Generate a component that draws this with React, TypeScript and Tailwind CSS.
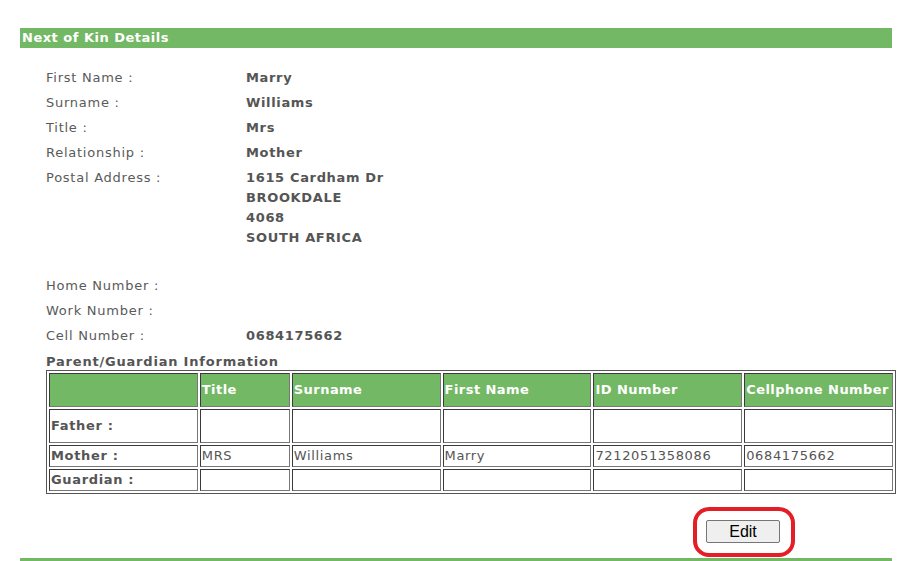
import React from "react";

const font = { fontFamily: '"DejaVu Sans", Verdana, sans-serif' };

type Row = { label: string; value?: string[] };

const details: Row[] = [
  { label: "First Name :", value: ["Marry"] },
  { label: "Surname :", value: ["Williams"] },
  { label: "Title :", value: ["Mrs"] },
  { label: "Relationship :", value: ["Mother"] },
  { label: "Postal Address :", value: ["1615 Cardham Dr", "BROOKDALE", "4068", "SOUTH AFRICA"] },
];

const phones: Row[] = [
  { label: "Home Number :" },
  { label: "Work Number :" },
  { label: "Cell Number :", value: ["0684175662"] },
];

const columns = ["", "Title", "Surname", "First Name", "ID Number", "Cellphone Number"];

const parents = [
  { who: "Father :", cells: ["", "", "", "", ""], h: "h-[34px]" },
  { who: "Mother :", cells: ["MRS", "Williams", "Marry", "7212051358086", "0684175662"], h: "h-[22px]" },
  { who: "Guardian :", cells: ["", "", "", "", ""], h: "h-[22px]" },
];

function DetailRow({ label, value }: Row) {
  return (
    <div className="flex py-[2.5px] leading-[20px] text-[13px]">
      <div className="w-[200px] shrink-0 text-[#5a5a5a] tracking-[0.75px]">{label}</div>
      <div className="font-bold text-[#555] tracking-[0.65px]">
        {value?.map((v) => (
          <div key={v}>{v}</div>
        ))}
      </div>
    </div>
  );
}

export default function App() {
  return (
    <div className="w-[912px] h-[561px] bg-white overflow-hidden pt-[28px]" style={font}>
      <div className="ml-[20px] w-[872px]">
        {/* --- Section heading --- */}
        <div className="h-[20px] bg-[#73b864] pl-[2px] text-[13px] leading-[20px] font-bold text-white tracking-[0.5px]">
          Next of Kin Details
        </div>

        <div className="pl-[26px] pt-[17.5px]">
          {details.map((r) => (
            <DetailRow key={r.label} {...r} />
          ))}

          <div className="mt-[23px]">
            {phones.map((r) => (
              <DetailRow key={r.label} {...r} />
            ))}
          </div>

          <div className="pt-[4px] leading-[17px] text-[13px] font-bold text-[#555] tracking-[0.8px]">
            Parent/Guardian Information
          </div>

          {/* --- Parent table --- */}
          <table className="w-[850px] table-fixed border-separate border-spacing-[2px] border border-[#555] text-[13px] text-[#555] tracking-[0.65px]">
            <colgroup>
              <col />
              <col className="w-[90px]" />
              <col />
              <col />
              <col />
              <col />
            </colgroup>
            <thead>
              <tr>
                {columns.map((c, i) => (
                  <th
                    key={i}
                    className="h-[34px] p-0 pl-px text-left align-middle font-bold text-white bg-[#73b864] border border-t-[#3a3a3a] border-l-[#3a3a3a] border-r-[#777] border-b-[#777] whitespace-nowrap tracking-[0.45px]"
                  >
                    {c}
                  </th>
                ))}
              </tr>
            </thead>
            <tbody>
              {parents.map((p) => (
                <tr key={p.who}>
                  <td className={`${p.h} p-0 pl-px align-middle font-bold border border-t-[#3a3a3a] border-l-[#3a3a3a] border-r-[#777] border-b-[#777]`}>
                    {p.who}
                  </td>
                  {p.cells.map((c, i) => (
                    <td
                      key={i}
                      className={`${p.h} p-0 pl-px align-middle border border-t-[#3a3a3a] border-l-[#3a3a3a] border-r-[#777] border-b-[#777]`}
                    >
                      {c}
                    </td>
                  ))}
                </tr>
              ))}
            </tbody>
          </table>
        </div>

        {/* --- Edit action --- */}
        <div className="flex justify-end pr-[112px] mt-[26px]">
          <div className="relative">
            <button
              className="w-[74px] h-[23px] rounded-[2px] border border-[#767676] bg-[#efefef] text-[16px] leading-[21px] text-black"
              style={{ fontFamily: '"Liberation Sans", Arial, sans-serif' }}
            >
              Edit
            </button>
            <div className="pointer-events-none absolute -top-[13px] -bottom-[13px] -left-[13px] -right-[15px] rounded-[16px] border-[4px] border-[#e41e26]" />
          </div>
        </div>

        <div className="mt-[14px] h-[4px] bg-[#73b864]" />
      </div>
    </div>
  );
}
